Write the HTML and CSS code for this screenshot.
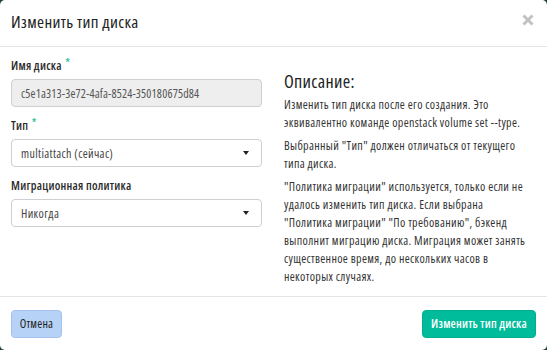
FILE: index.html
```html
<!DOCTYPE html>
<html lang="ru">
<head>
<meta charset="utf-8">
<title>Изменить тип диска</title>
<link rel="stylesheet" href="styles.css">
</head>
<body>
<div class="modal">
  <div class="modal-header">
    <h4 class="modal-title">Изменить тип диска</h4>
    <button class="close" type="button" aria-label="Close">
      <svg width="12" height="12" viewBox="0 0 12 12"><path d="M1.5 1.5L10.5 10.5M10.5 1.5L1.5 10.5" stroke="#c2c2c2" stroke-width="3" stroke-linecap="butt"/></svg>
    </button>
  </div>
  <div class="modal-body">
    <div class="col-form">
      <div class="form-group">
        <label class="control-label">Имя диска <span class="req">*</span></label>
        <div class="form-control readonly">c5e1a313-3e72-4afa-8524-350180675d84</div>
      </div>
      <div class="form-group">
        <label class="control-label">Тип <span class="req">*</span></label>
        <div class="form-control select">multiattach (сейчас)<span class="caret"></span></div>
      </div>
      <div class="form-group">
        <label class="control-label">Миграционная политика</label>
        <div class="form-control select">Никогда<span class="caret"></span></div>
      </div>
    </div>
    <div class="col-help">
      <h3 class="help-title">Описание:</h3>
      <p>Изменить тип диска после его создания. Это эквивалентно команде openstack volume set --type.</p>
      <p>Выбранный "Тип" должен отличаться от текущего типа диска.</p>
      <p>"Политика&nbsp;миграции" используется, только если не удалось изменить тип диска. Если выбрана "Политика&nbsp;миграции" "По&nbsp;требованию", бэкенд выполнит миграцию диска. Миграция может занять существенное время, до нескольких часов в некоторых случаях.</p>
    </div>
  </div>
  <div class="modal-footer">
    <button class="btn btn-cancel" type="button">Отмена</button>
    <button class="btn btn-primary" type="button">Изменить тип диска</button>
  </div>
</div>
</body>
</html>
```
FILE: styles.css
```css
* { box-sizing: border-box; }
html, body { margin: 0; height: 100%; }
body {
  background: #1f3f3a;
  font-family: "Open Sans", sans-serif;
  font-stretch: 75%;
  font-size: 12px;
  letter-spacing: 0.35px;
  color: #333;
}
.modal {
  width: 547px;
  height: 350px;
  background: #fff;
  border-radius: 5px;
  display: flex;
  flex-direction: column;
  overflow: hidden;
}
.modal-header {
  height: 47px;
  border-bottom: 1px solid #e5e5e5;
  display: flex;
  align-items: center;
  justify-content: space-between;
  padding: 0 13px 2px 11px;
}
.modal-title {
  margin: 0;
  font-size: 17px;
  letter-spacing: 0.35px;
  font-weight: 400;
  color: #222;
  line-height: 20px;
}
.close {
  border: 0;
  background: none;
  padding: 0;
  width: 12px;
  height: 12px;
  margin-top: -4px;
  display: block;
}
.close svg { display: block; }
.modal-body {
  flex: 1;
  display: grid;
  grid-template-columns: 251px 1fr;
  column-gap: 22px;
  padding: 10px 11px 0 11px;
  border-bottom: 1px solid #e5e5e5;
}
.form-group { margin-bottom: 10px; }
.control-label {
  display: block;
  font-weight: 600;
  line-height: 18px;
  margin-bottom: 4px;
  color: #2b2b2b;
  letter-spacing: 0.25px;
}
.req {
  color: #2fbf9f;
  font-size: 11px;
  position: relative;
  top: -4px;
  margin-left: 1px;
}
.form-control {
  height: 28px;
  border: 1px solid #cfcfcf;
  border-radius: 4px;
  padding: 0 9px;
  display: flex;
  align-items: center;
  color: #444;
  background: #fff;
}
.form-control.readonly { background: #eee; color: #555; letter-spacing: 0.15px; }
.select { justify-content: space-between; padding-right: 12px; }
.caret {
  width: 0; height: 0;
  border-left: 3.5px solid transparent;
  border-right: 3.5px solid transparent;
  border-top: 4px solid #222;
}
.col-help { padding-top: 14px; }
.help-title {
  margin: 0 0 5px 0;
  font-size: 18px;
  font-weight: 400;
  line-height: 20px;
  color: #222;
  letter-spacing: 0.3px;
}
.col-help p {
  margin: 0 0 5px 0;
  line-height: 18px;
  color: #333;
}
.modal-footer {
  height: 53px;
  display: flex;
  align-items: center;
  justify-content: space-between;
  padding: 0 11px;
}
.btn {
  height: 28px;
  border-radius: 4px;
  font-family: inherit;
  font-stretch: 75%;
  font-size: 12px;
  letter-spacing: 0.2px;
  padding: 0 6px;
  white-space: nowrap;
}
.btn-cancel {
  background: #b6d2f6;
  border: 1px solid #a3c3ee;
  color: #222;
  width: 51px;
}
.btn-primary {
  background: #00bc9b;
  border: 1px solid #00ae8f;
  color: #fff;
  font-weight: 600;
  width: 114px;
}
```
